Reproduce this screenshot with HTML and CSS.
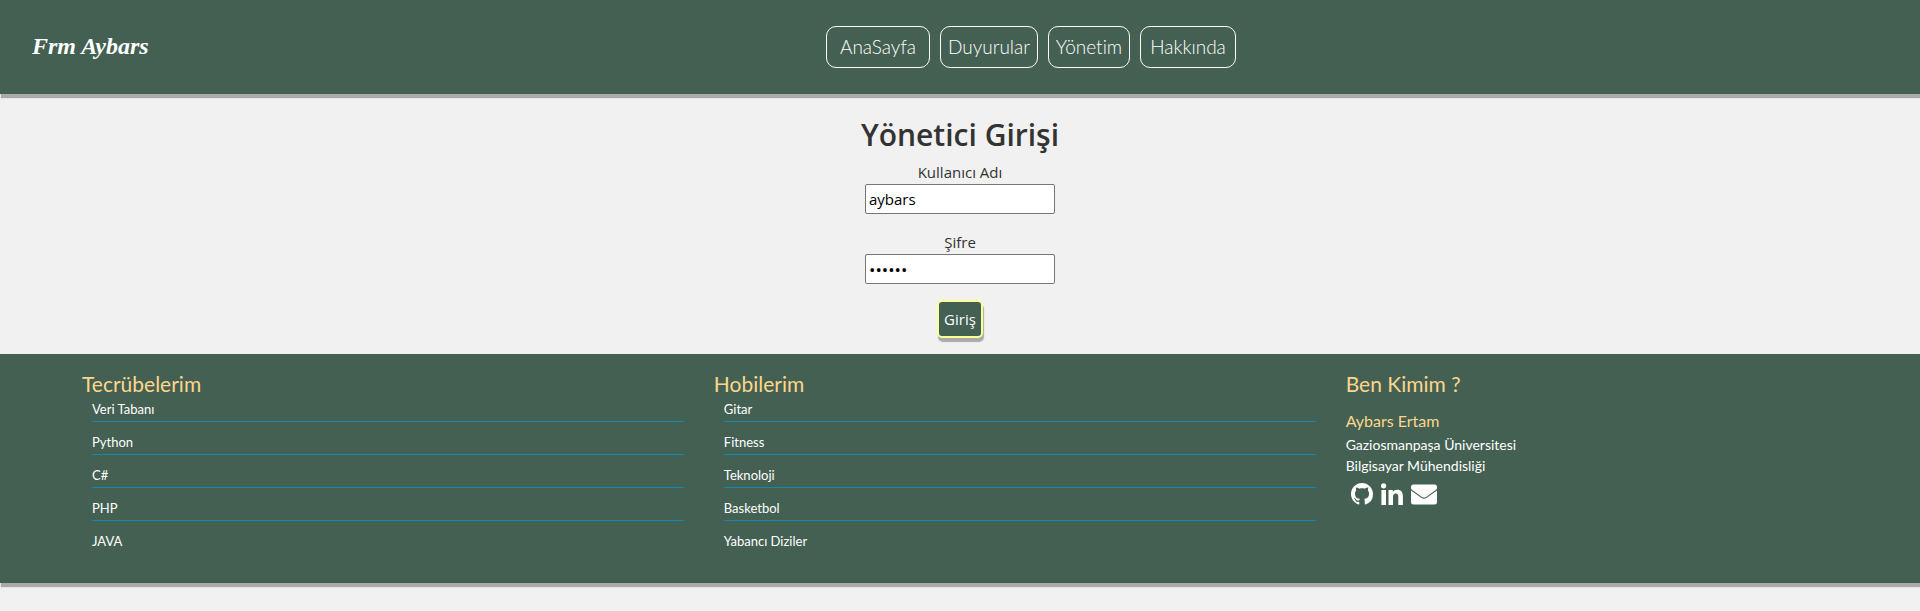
FILE: index.html
```html
<!DOCTYPE html>
<html lang="tr">
<head>
<meta charset="utf-8">
<title>Yönetici Girişi</title>
<link rel="stylesheet" href="styles.css">
</head>
<body>
<header class="header">
  <a class="logo" href="#">Frm Aybars</a>
  <nav class="nav">
    <a class="nav-link" href="#">AnaSayfa</a>
    <a class="nav-link" href="#">Duyurular</a>
    <a class="nav-link" href="#">Yönetim</a>
    <a class="nav-link" href="#">Hakkında</a>
  </nav>
</header>
<main>
  <form class="login">
    <h1 class="login-title">Yönetici Girişi</h1>
    <label class="login-label" for="user">Kullanıcı Adı</label>
    <input class="login-input" id="user" type="text" value="aybars">
    <label class="login-label" for="pass">Şifre</label>
    <input class="login-input login-password" id="pass" type="password" value="123456">
    <button class="login-button" type="button">Giriş</button>
  </form>
</main>
<footer class="footer">
  <section class="column">
    <h2 class="column-title">Tecrübelerim</h2>
    <ul class="list">
      <li class="item">Veri Tabanı</li>
      <li class="item">Python</li>
      <li class="item">C#</li>
      <li class="item">PHP</li>
      <li class="item">JAVA</li>
    </ul>
  </section>
  <section class="column">
    <h2 class="column-title">Hobilerim</h2>
    <ul class="list">
      <li class="item">Gitar</li>
      <li class="item">Fitness</li>
      <li class="item">Teknoloji</li>
      <li class="item">Basketbol</li>
      <li class="item">Yabancı Diziler</li>
    </ul>
  </section>
  <section class="column">
    <h2 class="column-title">Ben Kimim ?</h2>
    <h3 class="name">Aybars Ertam</h3>
    <p class="about">Gaziosmanpaşa Üniversitesi</p>
    <p class="about">Bilgisayar Mühendisliği</p>
    <div class="social">
      <a href="#" aria-label="GitHub"><svg width="22" height="22" viewBox="0 0 16 16" fill="currentColor"><path d="M8 0C3.58 0 0 3.58 0 8c0 3.54 2.29 6.53 5.47 7.59.4.07.55-.17.55-.38 0-.19-.01-.82-.01-1.49-2.01.37-2.53-.49-2.69-.94-.09-.23-.48-.94-.82-1.13-.28-.15-.68-.52-.01-.53.63-.01 1.08.58 1.23.82.72 1.21 1.87.87 2.33.66.07-.52.28-.87.51-1.07-1.78-.2-3.64-.89-3.64-3.95 0-.87.31-1.59.82-2.15-.08-.2-.36-1.02.08-2.12 0 0 .67-.21 2.2.82.64-.18 1.32-.27 2-.27s1.36.09 2 .27c1.53-1.04 2.2-.82 2.2-.82.44 1.1.16 1.92.08 2.12.51.56.82 1.27.82 2.15 0 3.07-1.87 3.75-3.65 3.95.29.25.54.73.54 1.48 0 1.07-.01 1.93-.01 2.2 0 .21.15.46.55.38A8.01 8.01 0 0 0 16 8c0-4.42-3.58-8-8-8z"/></svg></a>
      <a href="#" aria-label="LinkedIn"><svg width="22" height="22" viewBox="0 0 22 22" fill="currentColor"><circle cx="2.600" cy="2.800" r="2.600"/><path d="M.4 7h4.600v15H.4zM7.500 7h4.300v2c.8-1.400 2.300-2.300 4.400-2.300 4 0 5.700 2.500 5.700 6.500V22h-4.600v-8c0-2.200-.7-3.500-2.500-3.500-1.900 0-2.800 1.300-2.800 3.500v8H7.500z"/></svg></a>
      <a href="#" aria-label="E-posta"><svg width="26" height="22" viewBox="0 0 26 22" fill="currentColor"><path d="M2.500 1.500h21A2.500 2.500 0 0 1 26 4v.7c0 1-.5 1.800-1.300 2.400L15 13.900c-1.300.9-2.700.9-4 0L1.300 7.100C.5 6.500 0 5.700 0 4.700V4a2.500 2.500 0 0 1 2.500-2.500z"/><path d="M0 7.500l10.300 7.300c1.700 1.200 3.700 1.200 5.400 0L26 7.500V19a2.500 2.500 0 0 1-2.500 2.500h-21A2.500 2.500 0 0 1 0 19z"/></svg></a>
    </div>
  </section>
</footer>
</body>
</html>
```
FILE: styles.css
```css
* {
  box-sizing: border-box;
}

body {
  min-height: 100vh;
  margin: 0;
  background: #f1f1f1;
  color: #333;
  font-family: "Open Sans", "Noto Sans", sans-serif;
  font-size: 15px;
}

h1, h2, h3, p, ul {
  margin: 0;
  padding: 0;
  font-weight: 400;
}

a {
  color: inherit;
  text-decoration: none;
}

.header {
  display: grid;
  grid-template-columns: 1fr auto 1fr;
  align-items: start;
  padding: 26px 32px;
  background: #446052;
  color: #fff;
  box-shadow: 1px 4px 1px #aaa;
}

.logo {
  justify-self: start;
  font: italic bold 24px/40px "Liberation Serif", serif;
}

.nav {
  display: grid;
  grid-template-columns: 104px 98px 82px 96px;
  gap: 10px;
  padding-left: 142px;
}

.nav-link {
  border: 1px solid #fff;
  border-radius: 10px;
  font: 300 19px/40px Lato, sans-serif;
  font-variant-ligatures: none;
  text-align: center;
}

.login {
  display: flex;
  flex-direction: column;
  align-items: center;
  padding: 16px 0;
}

.login-title {
  font-size: 30px;
  font-weight: 600;
  line-height: 50px;
}

.login-label {
  line-height: 24px;
}

.login-input {
  width: 190px;
  height: 30px;
  margin-bottom: 16px;
  padding: 0 3px;
  border: 1px solid #767676;
  border-radius: 2px;
  background: #fff;
  color: #000;
  font: inherit;
}

.login-password {
  font-size: 17px;
}

.login-button {
  height: 38px;
  padding: 0 5px;
  border: 2px solid #ff9;
  border-radius: 5px;
  background: #446052;
  color: #fff;
  box-shadow: 1px 4px 1px #aaa;
  font: inherit;
}

.footer {
  display: grid;
  grid-template-columns: 11fr 11fr 10fr;
  padding: 16px 0 20px 82px;
  background: #446052;
  color: #fff;
  box-shadow: 1px 4px 1px #aaa;
  font-family: Lato, sans-serif;
}

.column {
  padding-right: 30px;
}

.column-title {
  color: #fcd68c;
  font-size: 21px;
  line-height: 28px;
}

.list {
  padding-left: 10px;
  list-style: none;
}

.item {
  height: 33px;
  font-size: 13px;
  line-height: 22px;
}

.item:not(:last-child) {
  background: linear-gradient(#1489b0, #1489b0) 0 23px / 100% 1px no-repeat;
}

.name {
  padding-top: 10px;
  color: #fcd68c;
  font-size: 16px;
  line-height: 26px;
}

.about {
  font-size: 14px;
  line-height: 21px;
}

.social {
  display: flex;
  gap: 8px;
  padding: 7px 5px 0;
}

.social svg {
  display: block;
}
```
